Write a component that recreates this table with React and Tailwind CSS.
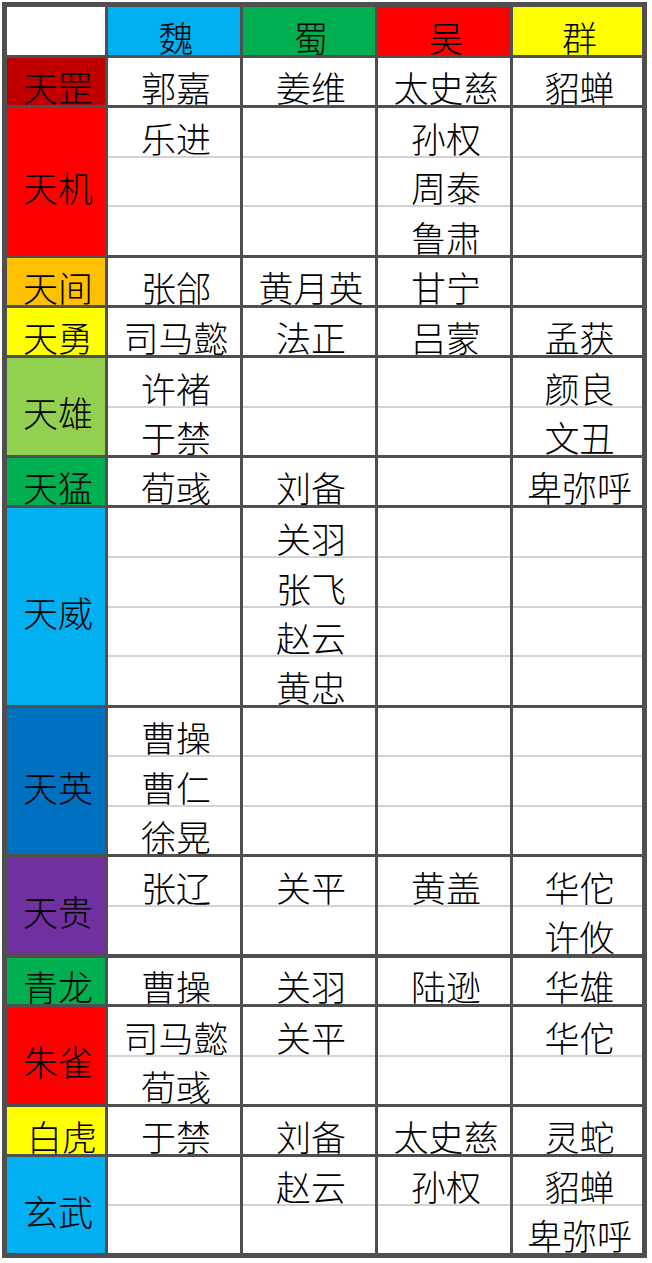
const LINE = 'bg-[#4f4f4f]';

const header = [
  { text: '', bg: 'bg-white' },
  { text: '魏', bg: 'bg-[#00b0f0]' },
  { text: '蜀', bg: 'bg-[#00b050]' },
  { text: '吴', bg: 'bg-[#ff0000]' },
  { text: '群', bg: 'bg-[#ffff00]' },
];

const groups = [
  { label: '天罡', bg: 'bg-[#c00000]', h: 'h-[47px]', cols: [['郭嘉'], ['姜维'], ['太史慈'], ['貂蝉']] },
  { label: '天机', bg: 'bg-[#ff0000]', h: 'h-[147px]', cols: [['乐进', '', ''], ['', '', ''], ['孙权', '周泰', '鲁肃'], ['', '', '']] },
  { label: '天间', bg: 'bg-[#ffc000]', h: 'h-[47px]', cols: [['张郃'], ['黄月英'], ['甘宁'], ['']] },
  { label: '天勇', bg: 'bg-[#ffff00]', h: 'h-[47px]', cols: [['司马懿'], ['法正'], ['吕蒙'], ['孟获']] },
  { label: '天雄', bg: 'bg-[#92d050]', h: 'h-[97px]', cols: [['许褚', '于禁'], ['', ''], ['', ''], ['颜良', '文丑']] },
  { label: '天猛', bg: 'bg-[#00b050]', h: 'h-[47px]', cols: [['荀彧'], ['刘备'], [''], ['卑弥呼']] },
  { label: '天威', bg: 'bg-[#00b0f0]', h: 'h-[197px]', cols: [['', '', '', ''], ['关羽', '张飞', '赵云', '黄忠'], ['', '', '', ''], ['', '', '', '']] },
  { label: '天英', bg: 'bg-[#0070c0]', h: 'h-[146px]', cols: [['曹操', '曹仁', '徐晃'], ['', '', ''], ['', '', ''], ['', '', '']] },
  { label: '天贵', bg: 'bg-[#7030a0]', h: 'h-[97px]', cols: [['张辽', ''], ['关平', ''], ['黄盖', ''], ['华佗', '许攸']] },
  { label: '青龙', bg: 'bg-[#00b050]', h: 'h-[46px]', cols: [['曹操'], ['关羽'], ['陆逊'], ['华雄']] },
  { label: '朱雀', bg: 'bg-[#ff0000]', h: 'h-[97px]', cols: [['司马懿', '荀彧'], ['关平', ''], ['', ''], ['华佗', '']] },
  { label: '白虎', bg: 'bg-[#ffff00]', h: 'h-[47px]', cols: [['于禁'], ['刘备'], ['太史慈'], ['灵蛇']], pad: 'pl-[12px]' },
  { label: '玄武', bg: 'bg-[#00b0f0]', h: 'h-[96px]', cols: [['', ''], ['赵云', ''], ['孙权', ''], ['貂蝉', '卑弥呼']] },
];

function Group({ g }) {
  const multi = g.cols[0].length > 1;
  return (
    <div className={`grid grid-cols-[98px_132px_132px_132px_129px] gap-x-[3px] ${g.h}`}>
      <div
        className={`${g.bg} flex justify-center ${multi ? 'items-center pt-[10px]' : 'items-end pb-[1px]'} ${g.pad || 'pl-[4px]'}`}
      >
        {g.label}
      </div>
      {g.cols.map((cells, ci) => (
        <div key={ci} className="bg-white flex flex-col">
          {cells.map((c, ri) => (
            <div
              key={ri}
              className={`flex-1 flex items-end justify-center pb-[1px] pl-[4px] ${ri > 0 ? 'border-t-2 border-[#d3d3d3]' : ''}`}
            >
              {c}
            </div>
          ))}
        </div>
      ))}
    </div>
  );
}

export default function App() {
  return (
    <div className="w-[652px] h-[1263px] bg-white pt-[2px] pl-[2px] overflow-hidden">
      <div
        className={`w-[645px] border-[5px] border-[#4f4f4f] ${LINE} flex flex-col text-[35px] leading-none font-light text-black`}
        style={{ fontFamily: '"Noto Sans CJK SC", "Noto Sans", sans-serif' }}
      >
        <div className="grid grid-cols-[98px_132px_132px_132px_129px] gap-x-[3px] h-[48px]">
          {header.map((h, i) => (
            <div key={i} className={`${h.bg} flex items-end justify-center pb-[1px] pl-[4px]`}>
              {h.text}
            </div>
          ))}
        </div>
        {groups.map((g, i) => (
          <div key={i} className={i === 9 ? 'pt-[4px]' : 'pt-[3px]'}>
            <Group g={g} />
          </div>
        ))}
      </div>
    </div>
  );
}
